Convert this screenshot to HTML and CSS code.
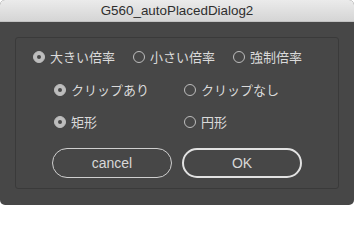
FILE: index.html
```html
<!DOCTYPE html>
<html lang="ja">
<head>
<meta charset="utf-8">
<title>G560_autoPlacedDialog2</title>
<link rel="stylesheet" href="styles.css">
</head>
<body>
<div class="window">
  <div class="titlebar">G560_autoPlacedDialog2</div>
  <div class="panel">
    <div class="row row-top">
      <label class="opt w100"><span class="radio on"></span><span class="lbl">大きい倍率</span></label>
      <label class="opt w100"><span class="radio"></span><span class="lbl">小さい倍率</span></label>
      <label class="opt"><span class="radio"></span><span class="lbl">強制倍率</span></label>
    </div>
    <div class="row row-sub">
      <label class="opt w130"><span class="radio on"></span><span class="lbl">クリップあり</span></label>
      <label class="opt"><span class="radio"></span><span class="lbl">クリップなし</span></label>
    </div>
    <div class="row row-sub row-3">
      <label class="opt w130"><span class="radio on"></span><span class="lbl">矩形</span></label>
      <label class="opt"><span class="radio"></span><span class="lbl">円形</span></label>
    </div>
    <div class="buttons">
      <button class="btn">cancel</button>
      <button class="btn btn-default">OK</button>
    </div>
  </div>
</div>
</body>
</html>
```

FILE: styles.css
```css
* { box-sizing: border-box; }
html, body { margin: 0; padding: 0; background: #ffffff; }
.window {
  width: 354px;
  height: 205px;
  border-radius: 5px;
  overflow: hidden;
  background: #474747;
  font-family: "Noto Sans CJK JP", "Liberation Sans", sans-serif;
}
.titlebar {
  height: 22px;
  line-height: 22px;
  text-align: center;
  font-family: "Liberation Sans", Arial, sans-serif;
  font-size: 13.4px;
  color: #2e2e2e;
  background: linear-gradient(#ebebeb, #d5d5d5);
  border-bottom: 1px solid #c2c2c2;
}
.panel {
  margin: 15px 15px 0 15px;
  height: 152px;
  border: 1px solid #3a3a3a;
  border-radius: 3px;
  padding: 9px 0 0 17px;
}
.row {
  display: flex;
  align-items: center;
  height: 20px;
}
.row-sub { margin-top: 13px; padding-left: 21px; }
.row-3 { margin-top: 12px; }
.opt {
  display: flex;
  align-items: center;
  gap: 5px;
  color: #dadada;
  font-size: 13px;
  line-height: 20px;
}
.w100 { width: 100px; }
.w130 { width: 130px; }
.radio {
  width: 12px;
  height: 12px;
  border-radius: 50%;
  border: 1px solid #bdbdbd;
  flex: none;
  display: flex;
  align-items: center;
  justify-content: center;
}
.radio.on {
  background: #bdbdbd;
}
.radio.on::after {
  content: "";
  width: 4px;
  height: 4px;
  border-radius: 50%;
  background: #474747;
}
.buttons {
  display: flex;
  justify-content: center;
  gap: 10px;
  margin-top: 16px;
  margin-left: -17px;
}
.btn {
  width: 120px;
  height: 30px;
  border-radius: 15px;
  border: 1px solid #cfcfcf;
  background: transparent;
  color: #d8d8d8;
  font-family: "Liberation Sans", Arial, sans-serif;
  font-size: 14px;
  padding: 0;
}
.btn-default {
  border: 2px solid #e2e2e2;
}
```
